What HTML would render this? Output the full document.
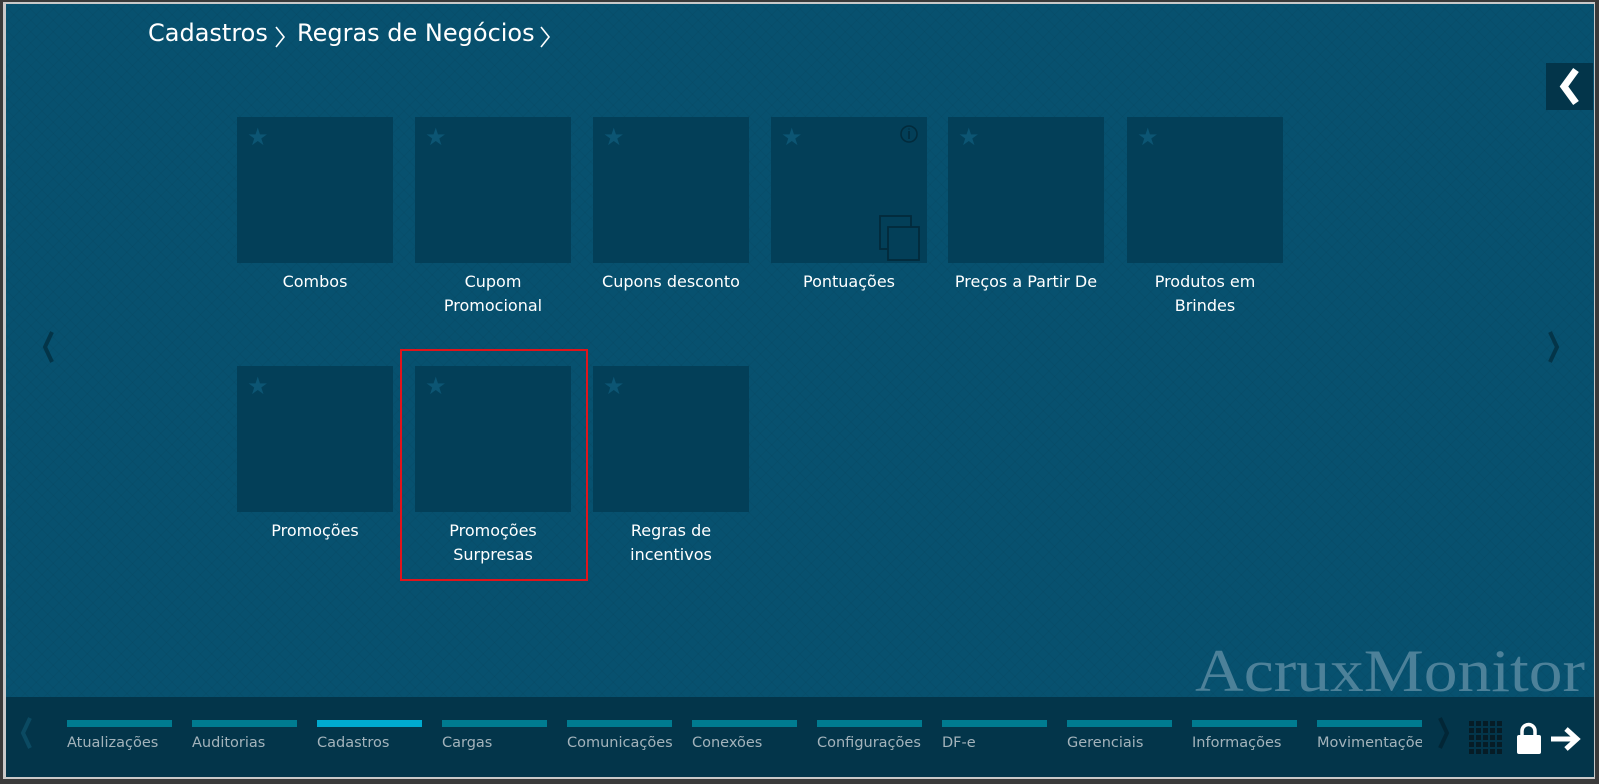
<!DOCTYPE html>
<html><head><meta charset="utf-8"><style>
html,body{margin:0;padding:0;width:1599px;height:784px;overflow:hidden;background:#333;}
#frame{position:absolute;left:0;top:0;width:1599px;height:784px;background:#3a3a3a;}
#inner{position:absolute;left:3px;top:2px;width:1592px;height:777px;background:#c9c9c9;}
#main{position:absolute;left:6px;top:4px;width:1588px;height:773px;background:#07516f;overflow:hidden;
background-image:repeating-linear-gradient(45deg,rgba(0,0,0,0.035) 0 1px,transparent 1px 8px),repeating-linear-gradient(-45deg,rgba(0,0,0,0.035) 0 1px,transparent 1px 8px);}
.abs{position:absolute;}
.t{font-family:"DejaVu Sans","Liberation Sans",sans-serif;}
.crumb{top:15px;font-size:24px;color:#fff;}
.tile{position:absolute;width:156px;height:146px;background:#033f58;}
.star{position:absolute;left:10px;top:8px;font-size:24px;color:#0c5573;font-family:"DejaVu Sans",sans-serif;line-height:24px;}
.lbl{position:absolute;width:180px;text-align:center;font-size:16px;line-height:24px;color:#fff;}
.bar{position:absolute;left:0;top:693px;width:1588px;height:80px;background:#03354a;}
.tab{position:absolute;top:23px;width:105px;}
.tab i{display:block;height:7px;background:#007b90;}
.tab span{display:block;margin-top:8px;font-size:14.5px;color:#a3b3bb;white-space:nowrap;}
</style></head><body>
<div id="frame"></div><div id="inner"></div>
<div id="main">
<div class="abs t crumb" style="left:142px;">Cadastros</div>
<svg class="abs" style="left:267px;top:21px" width="14" height="24"><path d="M3 2 L11 12 L3 22" stroke="#fff" stroke-width="1.6" fill="none"/></svg>
<div class="abs t crumb" style="left:291px;">Regras de Negócios</div>
<svg class="abs" style="left:532px;top:21px" width="14" height="24"><path d="M3 2 L11 12 L3 22" stroke="#fff" stroke-width="1.6" fill="none"/></svg>

<div class="abs" style="left:1540px;top:59px;width:47px;height:47px;background:#03354a;"></div>
<svg class="abs" style="left:1540px;top:59px" width="47" height="47"><path d="M30 7 L18 23.5 L30 40" stroke="#fff" stroke-width="7" fill="none"/></svg>

<svg class="abs" style="left:32px;top:325px" width="20" height="36"><path d="M14 3 L7 18 L14 33" stroke="#033549" stroke-width="4" fill="none"/></svg>
<svg class="abs" style="left:1538px;top:325px" width="20" height="36"><path d="M6 3 L13 18 L6 33" stroke="#033549" stroke-width="4" fill="none"/></svg>

<div class="tile" style="left:231px;top:113px"><div class="star">★</div></div>
<div class="tile" style="left:409px;top:113px"><div class="star">★</div></div>
<div class="tile" style="left:587px;top:113px"><div class="star">★</div></div>
<div class="tile" style="left:765px;top:113px"><div class="star">★</div>
<svg class="abs" style="left:128px;top:6px" width="22" height="22"><circle cx="10" cy="11" r="8" stroke="#022b3c" stroke-width="1.6" fill="none"/><path d="M10 8v8M10 5.5v1" stroke="#022b3c" stroke-width="1.6"/></svg>
<svg class="abs" style="left:108px;top:98px" width="44" height="46"><rect x="1" y="1" width="31" height="33" fill="none" stroke="#022b3c" stroke-width="1.8"/><rect x="9" y="12" width="31" height="33" fill="#033f58" stroke="#022b3c" stroke-width="1.8"/></svg>
</div>
<div class="tile" style="left:942px;top:113px"><div class="star">★</div></div>
<div class="tile" style="left:1121px;top:113px"><div class="star">★</div></div>

<div class="lbl t" style="left:219px;top:266px">Combos</div>
<div class="lbl t" style="left:397px;top:266px">Cupom<br>Promocional</div>
<div class="lbl t" style="left:575px;top:266px">Cupons desconto</div>
<div class="lbl t" style="left:753px;top:266px">Pontuações</div>
<div class="lbl t" style="left:930px;top:266px">Preços a Partir De</div>
<div class="lbl t" style="left:1109px;top:266px">Produtos em<br>Brindes</div>

<div class="tile" style="left:231px;top:362px"><div class="star">★</div></div>
<div class="tile" style="left:409px;top:362px"><div class="star">★</div></div>
<div class="tile" style="left:587px;top:362px"><div class="star">★</div></div>
<div class="lbl t" style="left:219px;top:515px">Promoções</div>
<div class="lbl t" style="left:397px;top:515px">Promoções<br>Surpresas</div>
<div class="lbl t" style="left:575px;top:515px">Regras de<br>incentivos</div>
<div class="abs" style="left:394px;top:345px;width:188px;height:232px;border:2px solid #e0141b;box-sizing:border-box;"></div>

<svg class="abs" style="left:1185px;top:634px" width="400" height="60"><text x="4" y="53" textLength="390" lengthAdjust="spacingAndGlyphs" font-family="Liberation Serif,serif" font-size="60" fill="#4d8199">AcruxMonitor</text></svg>

<div class="bar">
<svg class="abs" style="left:10px;top:18px" width="20" height="36"><path d="M14 3 L7 18 L14 33" stroke="#0b4a62" stroke-width="4" fill="none"/></svg>
<div class="tab t" style="left:61px"><i></i><span>Atualizações</span></div>
<div class="tab t" style="left:186px"><i></i><span>Auditorias</span></div>
<div class="tab t" style="left:311px"><i style="background:#00aacf"></i><span>Cadastros</span></div>
<div class="tab t" style="left:436px"><i></i><span>Cargas</span></div>
<div class="tab t" style="left:561px"><i></i><span>Comunicações</span></div>
<div class="tab t" style="left:686px"><i></i><span>Conexões</span></div>
<div class="tab t" style="left:811px"><i></i><span>Configurações</span></div>
<div class="tab t" style="left:936px"><i></i><span>DF-e</span></div>
<div class="tab t" style="left:1061px"><i></i><span>Gerenciais</span></div>
<div class="tab t" style="left:1186px"><i></i><span>Informações</span></div>
<div class="tab t" style="left:1311px;overflow:hidden;"><i></i><span>Movimentações</span></div>
<svg class="abs" style="left:1428px;top:18px" width="20" height="36"><path d="M6 3 L13 18 L6 33" stroke="#022636" stroke-width="4" fill="none"/></svg>
<svg class="abs" style="left:1463px;top:24px" width="34" height="34" fill="#061c26">
<g id="r"><rect x="0" y="0" width="5" height="5"/><rect x="7" y="0" width="5" height="5"/><rect x="14" y="0" width="5" height="5"/><rect x="21" y="0" width="5" height="5"/><rect x="28" y="0" width="5" height="5"/></g>
<use href="#r" y="7"/><use href="#r" y="14"/><use href="#r" y="21"/><use href="#r" y="28"/></svg>
<svg class="abs" style="left:1509px;top:24px" width="28" height="34"><path d="M7 15 V10 A6.5 6.5 0 0 1 20 10 V15" stroke="#fff" stroke-width="3.5" fill="none"/><rect x="2" y="14" width="24" height="19" rx="2" fill="#fff"/></svg>
<svg class="abs" style="left:1543px;top:29px" width="36" height="26"><path d="M2 13 H27 M17 3 L28 13 L17 23" stroke="#fff" stroke-width="5" fill="none"/></svg>
</div>
</div>
</body></html>
